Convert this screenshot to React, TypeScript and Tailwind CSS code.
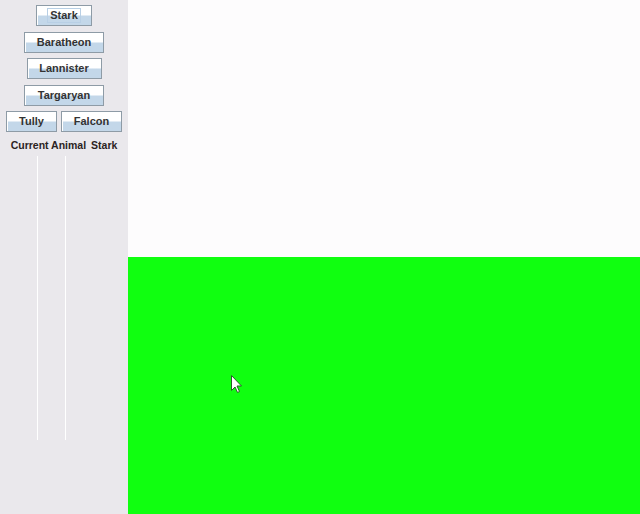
const houses = [
  { label: 'Stark', width: 'w-[56px]', focused: true },
  { label: 'Baratheon', width: 'w-[80px]' },
  { label: 'Lannister', width: 'w-[75px]' },
  { label: 'Targaryan', width: 'w-[80px]' },
]

function SwingButton({ label, width, focused }: { label: string; width: string; focused?: boolean }) {
  return (
    <button
      className={`${width} h-[21px] border border-[#8e9ba6] bg-gradient-to-b from-white from-45% to-[#c3d7e9] to-55% shadow-[inset_1px_1px_0_#ffffff] flex items-center justify-center text-[11px] font-bold text-[#333333]`}
    >
      <span className={focused ? 'px-[2px] leading-[13px] outline outline-1 outline-[#b8cfe5]' : ''}>{label}</span>
    </button>
  )
}

function Cursor() {
  return (
    <svg className="absolute left-[103px] top-[118px]" width="12" height="19" viewBox="0 0 12 19">
      <path d="M0.5 0.5 L0.5 15.5 L4 12 L6.5 17.5 L8.5 16.5 L6 11 L10.5 11 Z" fill="#ffffff" stroke="#2a5d2a" strokeWidth="1" />
    </svg>
  )
}

export default function App() {
  return (
    <div className="flex w-[640px] h-[514px] overflow-hidden" style={{ fontFamily: '"Liberation Sans", Arial, sans-serif' }}>
      {/* Control panel */}
      <div className="w-[128px] shrink-0 bg-[#eae8ec] flex flex-col items-center pt-[5px] gap-[5.5px]">
        {houses.map(h => (
          <SwingButton key={h.label} label={h.label} width={h.width} focused={h.focused} />
        ))}
        <div className="flex gap-[4px]">
          <SwingButton label="Tully" width="w-[51px]" />
          <SwingButton label="Falcon" width="w-[61px]" />
        </div>
        <div className="text-[10.5px] leading-[12px] font-bold text-[#2b2323] mt-[1px]">
          Current Animal <span className="ml-[2px]">Stark</span>
        </div>
        <div className="self-start ml-[37px] w-[29px] h-[284px] border-x border-white" />
      </div>

      {/* Canvas */}
      <div className="flex-1 flex flex-col">
        <div className="h-[257px] bg-[#fdfcfd]" />
        <div className="flex-1 bg-[#10ff10] relative">
          <Cursor />
        </div>
      </div>
    </div>
  )
}
